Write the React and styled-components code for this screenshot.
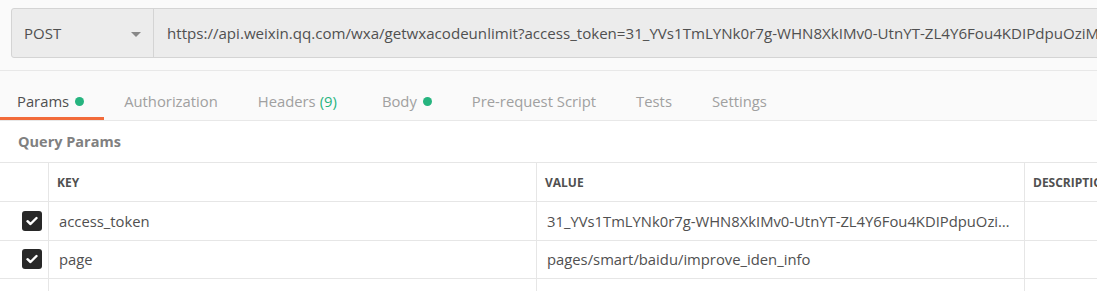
import React from 'react';
import styled, { createGlobalStyle } from 'styled-components';

const GlobalStyle = createGlobalStyle`
  html, body {
    margin: 0;
    padding: 0;
    background: #ffffff;
    overflow: hidden;
  }
  body {
    font-family: "Open Sans", "Noto Sans", sans-serif;
    color: #505050;
  }
`;

const Page = styled.div`
  width: 1097px;
  height: 291px;
  overflow: hidden;
`;

const RequestBar = styled.div`
  background: #fafafa;
  padding: 8px 0 12px 11px;
  border-bottom: 1px solid #e8e8e8;
`;

const UrlGroup = styled.div`
  display: flex;
  height: 48px;
  width: 1300px;
  border: 1px solid #d4d4d4;
  border-radius: 3px;
  background: #ececec;
`;

const MethodSelect = styled.div`
  display: flex;
  align-items: center;
  justify-content: space-between;
  width: 142px;
  box-sizing: border-box;
  padding: 0 12px;
  border-right: 1px solid #d4d4d4;
  font-size: 15px;
  color: #505050;
`;

const Caret = styled.span`
  width: 0;
  height: 0;
  border-left: 5px solid transparent;
  border-right: 5px solid transparent;
  border-top: 5px solid #888;
  margin-top: 2px;
`;

const UrlText = styled.div`
  display: flex;
  align-items: center;
  padding-left: 13px;
  font-size: 15.1px;
  color: #505050;
  white-space: nowrap;
`;

const Tabs = styled.div`
  display: flex;
  border-bottom: 1px solid #e8e8e8;
  background: #fafafa;
`;

const Tab = styled.div`
  display: flex;
  align-items: center;
  gap: 6px;
  padding: 20px 20px 6px;
  line-height: 20px;
  font-size: 14.8px;
  color: ${p => (p.$active ? '#505050' : '#a0a0a0')};
  border-bottom: 3px solid ${p => (p.$active ? '#f26b3a' : 'transparent')};
  margin-right: ${p => p.$gap || 0}px;

  &:first-child {
    padding-left: 17px;
  }
`;

const Dot = styled.span`
  width: 9px;
  height: 9px;
  border-radius: 50%;
  background: #26b47f;
`;

const Count = styled.span`
  color: #26b47f;
  margin-left: -2px;
`;

const SectionTitle = styled.div`
  padding: 11px 18px 10px;
  line-height: 20px;
  font-size: 14.5px;
  font-weight: 700;
  color: #808080;
  background: #fff;
`;

const Table = styled.div`
  display: grid;
  grid-template-columns: 49px 488px 488px 200px;
  grid-template-rows: 39px;
  grid-auto-rows: 38.5px;
  width: 1225px;
  border-top: 1px solid #e6e6e6;
`;

const Cell = styled.div`
  box-sizing: border-box;
  display: flex;
  align-items: center;
  padding: 0 10px 0 ${p => (p.$head ? '8px' : '10px')};
  border-bottom: 1px solid #e6e6e6;
  border-right: 1px solid #e6e6e6;
  font-size: ${p => (p.$head ? '12px' : '14.8px')};
  font-weight: ${p => (p.$head ? 700 : 400)};
  color: #505050;
  white-space: nowrap;
  overflow: hidden;
`;

const CheckCell = styled(Cell)`
  justify-content: flex-end;
  padding-right: 6px;
`;

const CellText = styled.span`
  overflow: hidden;
  text-overflow: ellipsis;
  white-space: nowrap;
  display: block;
  width: 100%;
`;

const Check = styled.span`
  width: 20px;
  height: 20px;
  border-radius: 3px;
  background: #282828;
  display: flex;
  align-items: center;
  justify-content: center;
`;

const CheckBox = () => (
  <Check>
    <svg width="12" height="10" viewBox="0 0 12 10">
      <path d="M1.5 5.2 L4.5 8 L10.5 2" fill="none" stroke="#fff" strokeWidth="2.4" strokeLinecap="round" strokeLinejoin="round" />
    </svg>
  </Check>
);

const token = '31_YVs1TmLYNk0r7g-WHN8XkIMv0-UtnYT-ZL4Y6Fou4KDIPdpuOziMpQ8rC3vXk0jLmNe2wB';

const rows = [
  { key: 'access_token', value: token, checked: true },
  { key: 'page', value: 'pages/smart/baidu/improve_iden_info', checked: true },
  { key: 'scene', value: 'ori=1', checked: false },
];

const App = () => {
  return (
    <Page>
      <GlobalStyle />
      <RequestBar>
        <UrlGroup>
          <MethodSelect>
            POST
            <Caret />
          </MethodSelect>
          <UrlText>https://api.weixin.qq.com/wxa/getwxacodeunlimit?access_token={token}</UrlText>
        </UrlGroup>
      </RequestBar>

      <Tabs>
        <Tab $active>Params <Dot /></Tab>
        <Tab>Authorization</Tab>
        <Tab $gap={5}>Headers <Count>(9)</Count></Tab>
        <Tab>Body <Dot /></Tab>
        <Tab>Pre-request Script</Tab>
        <Tab>Tests</Tab>
        <Tab>Settings</Tab>
      </Tabs>

      <SectionTitle>Query Params</SectionTitle>

      <Table>
        <Cell $head />
        <Cell $head>KEY</Cell>
        <Cell $head>VALUE</Cell>
        <Cell $head>DESCRIPTION</Cell>
        {rows.map(r => (
          <React.Fragment key={r.key}>
            <CheckCell>{r.checked && <CheckBox />}</CheckCell>
            <Cell><CellText>{r.key}</CellText></Cell>
            <Cell><CellText>{r.value}</CellText></Cell>
            <Cell />
          </React.Fragment>
        ))}
      </Table>
    </Page>
  );
};

export default App;
